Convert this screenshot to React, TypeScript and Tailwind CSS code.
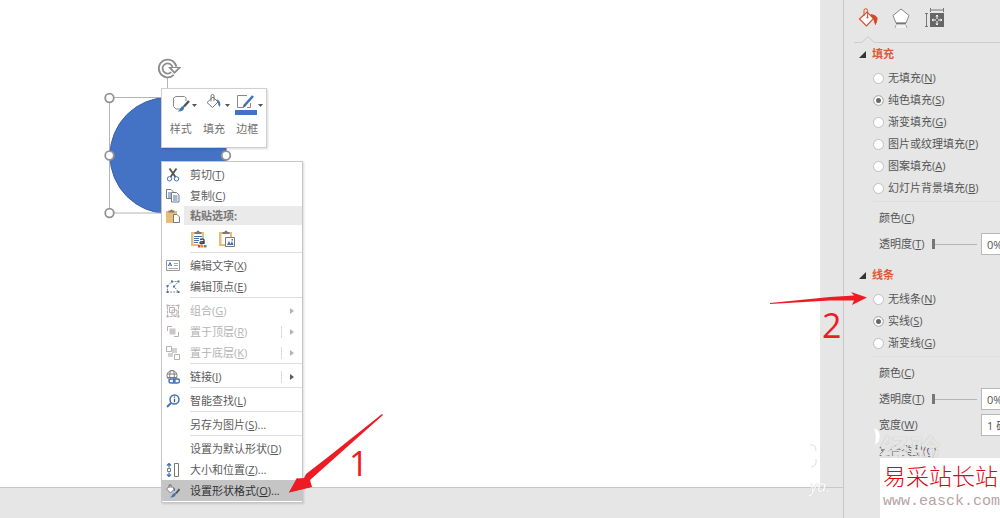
import React, { ReactNode } from "react";

type IconName =
  | "cut" | "copy" | "paste" | "text" | "points" | "group" | "front" | "back"
  | "link" | "search" | "size" | "format";

type Item = {
  label: string;
  accel: string;
  icon?: IconName;
  suffix?: string;
  disabled?: boolean;
  split?: boolean;
  arrow?: boolean;
  active?: boolean;
};

const groups: Item[][] = [
  [
    { label: "编辑文字", accel: "X", icon: "text" },
    { label: "编辑顶点", accel: "E", icon: "points" },
  ],
  [
    { label: "组合", accel: "G", icon: "group", disabled: true, arrow: true },
    { label: "置于顶层", accel: "R", icon: "front", disabled: true, arrow: true, split: true },
    { label: "置于底层", accel: "K", icon: "back", disabled: true, arrow: true, split: true },
  ],
  [{ label: "链接", accel: "I", icon: "link", arrow: true, split: true }],
  [{ label: "智能查找", accel: "L", icon: "search" }],
  [{ label: "另存为图片", accel: "S", suffix: "..." }],
  [
    { label: "设置为默认形状", accel: "D" },
    { label: "大小和位置", accel: "Z", icon: "size", suffix: "..." },
    { label: "设置形状格式", accel: "O", icon: "format", suffix: "...", active: true },
  ],
];

const blue = "#3f74b5";
const grey = "#7a7a7a";
const pale = "#b9b0b4";
const tan = "#e9bd78";

const drawings: Record<IconName, ReactNode> = {
  cut: (
    <>
      <path d="M3.500 0.500 L9.500 9 M10.500 0.500 L4.500 9" stroke="#555" strokeWidth="1.800" />
      <circle cx="3.500" cy="10.800" r="2.200" stroke={blue} />
      <circle cx="10.500" cy="10.800" r="2.200" stroke={blue} />
    </>
  ),
  copy: (
    <>
      <path d="M0.500 0.500h4.500l2 2v7h-6.500z" fill="#fff" stroke={grey} />
      <path d="M2 4h3M2 6h3M2 8h3" stroke={blue} />
      <path d="M5.500 3.500h5l2.500 2.500v7h-7.500z" fill="#fff" stroke={grey} />
      <path d="M7 7h4.500M7 9h4.500M7 11h4.500" stroke={blue} />
    </>
  ),
  paste: (
    <>
      <path d="M0 2h11v12H0z" fill={tan} />
      <path d="M2.500 3.500V1.500h1.800a1.300 1.300 0 0 1 2.500 0H8.500v2z" fill={grey} />
      <path d="M7.500 5.500h3.500l2.500 2.500v5.500h-6z" fill="#fff" stroke={grey} />
    </>
  ),
  text: (
    <>
      <path d="M0.500 1.500h13v10h-13z" fill="#fff" stroke="#999" />
      <path d="M2.300 7 L4 3.500 L5.700 7 M3 6h2" stroke={blue} />
      <path d="M8 4.500h4M8 6.500h4M2.500 9.500h9.500" stroke="#aaa" />
    </>
  ),
  points: (
    <>
      <path d="M1.500 6 L6 1.500 H12.500 L8 6.500 L12.500 12 H1.500 Z" stroke="#888" strokeDasharray="2 1" />
      <path d="M0.500 5h2v2h-2zM5 0.500h2v2H5zM11.500 0.500h2v2h-2zM7 5.500h2v2H7zM11.500 11h2v2h-2zM0.500 11h2v2h-2z" fill={blue} />
    </>
  ),
  group: (
    <>
      <path d="M1.500 1.500h11v11h-11z" stroke={pale} strokeDasharray="3 1" />
      <path d="M3.500 3.500h5v5h-5zM6 6h5v5H6z" stroke={pale} />
      <path d="M0.500 0.500h2v2h-2zM11.500 0.500h2v2h-2zM0.500 11.500h2v2h-2zM11.500 11.500h2v2h-2z" fill={pale} />
    </>
  ),
  front: (
    <>
      <path d="M6 1.500H1.500V6M12.500 7v4.500H8" stroke={pale} />
      <path d="M3.500 3.500h6v6h-6z" fill="#ccc6c9" />
    </>
  ),
  back: (
    <>
      <path d="M6 2h5v5H6zM2 7h5v4H2z" fill="#d6d0d3" />
      <path d="M0.500 0.500h5v5h-5zM8.500 8.500h5v5h-5z" fill="#fff" stroke={pale} />
    </>
  ),
  link: (
    <>
      <circle cx="6" cy="5.500" r="5" stroke={grey} />
      <ellipse cx="6" cy="5.500" rx="2.300" ry="5" stroke={grey} />
      <path d="M1 4h10M1 7.500h10" stroke={grey} />
      <rect x="3" y="9" width="6" height="4" rx="2" fill="#fff" stroke={blue} strokeWidth="1.400" />
      <rect x="7.500" y="9" width="6" height="4" rx="2" stroke={blue} strokeWidth="1.400" />
    </>
  ),
  search: (
    <>
      <circle cx="8.500" cy="5.500" r="4.500" fill="#fff" stroke={blue} strokeWidth="1.500" />
      <path d="M5 9 L1 13" stroke={blue} strokeWidth="2" />
      <path d="M8.500 2.500v1.200M8.500 4.700v3.500" stroke="#555" strokeWidth="1.300" />
    </>
  ),
  size: (
    <>
      <path d="M3 0.500v4M3 9.500v4M1 2.500l2-2 2 2M1 11.500l2 2 2-2" stroke={blue} strokeWidth="1.300" />
      <path d="M1.500 5.500h3v3h-3z" stroke={grey} />
      <path d="M8.500 0.500h4v13h-4z" fill="#fff" stroke={grey} />
    </>
  ),
  format: (
    <>
      <path d="M0.500 5 L4.500 1 L8.500 5 L4.500 9 Z" fill="#fff" stroke={grey} />
      <path d="M3 4V1.500a1 1 0 0 1 2 0V4" stroke={grey} />
      <path d="M13.500 5 L10 9.500" stroke="#555" strokeWidth="2" />
      <path d="M7 3Q9.500 4 9 7.500Q7.500 6 7 3" fill={blue} />
      <path d="M10 9 Q10 13.500 4 13.500 Q6 12 6.500 10.500 Q7.500 8.500 10 9" fill={blue} />
    </>
  ),
};

function Icon({ name }: { name: IconName }) {
  return (
    <svg viewBox="0 0 14 14" className="size-[14px]" fill="none" aria-hidden="true">
      {drawings[name]}
    </svg>
  );
}

function Row({ item }: { item: Item }) {
  const tone = item.disabled ? "text-[#b4b4b4]" : "text-[#5c5c5c]";
  return (
    <li>
      <button
        type="button"
        disabled={item.disabled}
        className={`flex h-[21px] w-full items-center text-left ${item.active ? "bg-[#c5c5c5] text-[#333]" : tone}`}
      >
        <span className="flex w-[22px] shrink-0 justify-center">{item.icon && <Icon name={item.icon} />}</span>
        <span className="flex-1 pl-[6px] whitespace-nowrap">
          {item.label}(<u className="underline-offset-1">{item.accel}</u>){item.suffix}
        </span>
        {item.arrow && (
          <span className={`flex h-3 w-[21px] items-center border-l pl-2 ${item.split ? "border-[#dcdcdc]" : "border-transparent"}`}>
            <svg viewBox="0 0 4 6" className="h-[6px] w-[4px]" aria-hidden="true">
              <path d="M0 0L4 3L0 6z" fill="currentColor" />
            </svg>
          </span>
        )}
      </button>
    </li>
  );
}

function ContextMenu() {
  return (
    <div className="absolute top-[161px] left-[161px] w-[142px] border border-[#c6c6c6] bg-white pt-[2px] pb-px shadow-[1px_1px_2px_rgba(0,0,0,0.15)]">
      <ul>
        <Row item={{ label: "剪切", accel: "T", icon: "cut" }} />
        <Row item={{ label: "复制", accel: "C", icon: "copy" }} />
      </ul>
      <div className="flex h-[19px] items-center font-bold text-[#777]">
        <span className="flex w-[22px] justify-center"><Icon name="paste" /></span>
        <span className="flex h-full flex-1 items-center bg-[#eaeaea] pl-[6px]">粘贴选项:</span>
      </div>
      <div className="flex h-[27px] items-center gap-3 pl-[29px]">
        <button type="button" aria-label="使用目标主题">
          <svg viewBox="0 0 16 18" className="h-[18px] w-[16px]" fill="none">
            <path d="M0 2h13v14H0z" fill={tan} />
            <path d="M2.500 4h8.500v10H2.500z" fill="#fff" />
            <path d="M3.500 4V2h2a1.500 1.500 0 0 1 3 0h2v2z" fill={grey} />
            <path d="M3 6.500h8M3 8.500h6M3 10.500h5M3 12.500h4" stroke={blue} />
            <path d="M8 8h7v8H8z" fill="#fff" />
            <path d="M9 9.500q4-1.500 4 1V14M13 11.500q-4 0-4 1.500t4 0" stroke="#444" strokeWidth="1.400" />
            <path d="M7 15h2.500v2.500H7z" fill="#d24726" />
            <path d="M10 15h2.500v2.500H10z" fill="#e08b3a" />
            <path d="M13 15h2.500v2.500H13z" fill="#58985f" />
          </svg>
        </button>
        <button type="button" aria-label="图片">
          <svg viewBox="0 0 16 18" className="h-[18px] w-[16px]" fill="none">
            <path d="M0 2h13v14H0z" fill={tan} />
            <path d="M2.500 4h8.500v10H2.500z" fill="#fff" />
            <path d="M3.500 4V2h2a1.500 1.500 0 0 1 3 0h2v2z" fill={grey} />
            <path d="M6.500 7.500h9v9h-9z" fill="#fff" stroke={grey} />
            <path d="M8 15l2-4 1.500 3 1.500-3 1.500 4z" fill={blue} />
            <path d="M12.500 9h1.500v1.500h-1.500z" fill={blue} />
          </svg>
        </button>
      </div>
      {groups.map((g, i) => (
        <ul key={i} className="relative pt-[3px] before:absolute before:top-0 before:right-0 before:left-[28px] before:h-px before:bg-[#dedede]">
          {g.map((it) => <Row key={it.accel} item={it} />)}
        </ul>
      ))}
    </div>
  );
}

function Caret() {
  return (
    <svg viewBox="0 0 5 3" className="h-[3px] w-[5px]" aria-hidden="true">
      <path d="M0 0h5L2.500 3z" fill="#555" />
    </svg>
  );
}

function MiniToolbar() {
  const cell = "flex flex-1 flex-col items-center gap-[5px] whitespace-nowrap";
  return (
    <div className="absolute top-[88px] left-[161px] flex h-[60px] w-[106px] border border-[#cfcfcf] bg-white px-[2px] pt-[5px] text-[#707070] shadow-[1px_1px_2px_rgba(0,0,0,0.15)]">
      <button type="button" className={cell}>
        <span className="flex items-center gap-[2px] pl-2">
          <svg viewBox="0 0 18 22" className="h-[22px] w-[18px]" fill="none">
            <path d="M8 15H4L1.500 12.500V4L4 2.500H12.500L14 4V7" stroke="#888" />
            <path d="M17 7L12 12.500" stroke="#555" strokeWidth="2.400" />
            <path d="M12 12q1.500 5.500-6.500 5.500q2.500-1.500 3-3.500q1-2 3.500-2" fill={blue} />
          </svg>
          <Caret />
        </span>
        <span>样式</span>
      </button>
      <button type="button" className={cell}>
        <span className="flex items-center gap-[3px] pl-2">
          <svg viewBox="0 0 16 22" className="h-[22px] w-[16px]" fill="none">
            <path d="M1 8.500L7 3L12 8L6.500 13.500Z" fill="#fff" stroke="#777" />
            <path d="M5 7.500V2a1.500 1.500 0 0 1 3 0V7" stroke="#777" />
            <path d="M10.500 5Q15.500 7 14 13Q11.500 11 12 8z" fill={blue} />
          </svg>
          <Caret />
        </span>
        <span>填充</span>
      </button>
      <button type="button" className={cell}>
        <span className="flex items-center gap-px pl-1">
          <svg viewBox="0 0 22 22" className="h-[22px] w-[22px]" fill="none">
            <path d="M12 1.500H2.500V13.500H9M15.500 9V13.500H12" stroke="#888" />
            <path d="M18 2L9 12" stroke={blue} strokeWidth="2.600" />
            <path d="M9.500 10.500L7.500 13.500L10.500 12.500z" fill="#555" />
            <path d="M0 16h22v5H0z" fill="#4472c4" />
          </svg>
          <Caret />
        </span>
        <span>边框</span>
      </button>
    </div>
  );
}

function Shape() {
  return (
    <svg viewBox="0 0 130 170" className="absolute top-[50px] left-[103px] h-[170px] w-[130px]" fill="none" aria-hidden="true">
      <circle cx="65" cy="105.500" r="58" fill="#4472c4" stroke="#3a62a8" />
      <path d="M6.500 47.500H123.500V163H6.500zM64.500 26V47" stroke="#b4b4b4" />
      <g fill="#fff" stroke="#939393" strokeWidth="1.800">
        <circle cx="6.500" cy="48" r="4.300" />
        <circle cx="6.500" cy="105.500" r="4.300" />
        <circle cx="6.500" cy="163" r="4.300" />
        <circle cx="123" cy="105.500" r="4.300" />
      </g>
      <path d="M69.500 23.500A7 7 0 1 1 71.500 17" stroke="#8c8c8c" strokeWidth="5.500" />
      <path d="M65 17H78.500L71.500 24z" fill="#8c8c8c" />
      <path d="M69.500 23.500A7 7 0 1 1 71.500 17" stroke="#fff" strokeWidth="2" />
      <path d="M68.500 18H75L71.500 21.500z" fill="#fff" />
    </svg>
  );
}

function Heading({ children }: { children: ReactNode }) {
  return (
    <button type="button" className="mb-[2px] flex h-[22px] items-center gap-[6px] pl-[15px] font-bold text-[#dc5a38]">
      <svg viewBox="0 0 7 7" className="size-[7px]" aria-hidden="true">
        <path d="M7 0V7H0z" fill="#333" />
      </svg>
      {children}
    </button>
  );
}

function Radios({ name, options, chosen }: { name: string; options: [string, string][]; chosen: string }) {
  return (
    <fieldset className="relative pb-[6px] pl-[29px] after:absolute after:right-0 after:bottom-[3px] after:left-[29px] after:h-px after:bg-[#dedede]">
      {options.map(([label, key]) => (
        <label key={key} className="flex h-[22px] items-center gap-1 whitespace-nowrap">
          <input
            type="radio"
            name={name}
            defaultChecked={key === chosen}
            className="size-[11px] shrink-0 appearance-none rounded-full border border-[#c0c0c0] bg-white checked:bg-[#666] checked:shadow-[inset_0_0_0_2px_white]"
          />
          <span>{label}(<u className="underline-offset-1">{key}</u>)</span>
        </label>
      ))}
    </fieldset>
  );
}

function Label({ text, k, id }: { text: string; k: string; id?: string }) {
  return (
    <label htmlFor={id} className="w-[53px] shrink-0 whitespace-nowrap">
      {text}(<u className="underline-offset-1">{k}</u>)
    </label>
  );
}

const fieldRow = "flex h-[26px] items-center pl-[35px]";
const box = "h-[22px] w-[60px] shrink-0 border border-[#b8b8b8] bg-white pl-[5px] text-[#555]";

function Transparency({ id }: { id: string }) {
  return (
    <div className={fieldRow}>
      <Label text="透明度" k="T" id={id} />
      <input
        id={id}
        type="range"
        defaultValue={0}
        className="h-[10px] w-[45px] shrink-0 appearance-none bg-transparent bg-[linear-gradient(#b5b5b5,#b5b5b5)] bg-[length:100%_1px] bg-center bg-no-repeat [&::-webkit-slider-thumb]:h-[10px] [&::-webkit-slider-thumb]:w-[3px] [&::-webkit-slider-thumb]:appearance-none [&::-webkit-slider-thumb]:bg-[#777]"
      />
      <input aria-label="透明度百分比" defaultValue="0%" className={`ml-1 ${box}`} />
    </div>
  );
}

function FormatPane() {
  return (
    <aside className="relative w-[157px] shrink-0 overflow-hidden border-l border-[#c8c8c8] text-[#555]">
      <div className="flex h-[36px] items-center gap-[14px] pl-[14px]">
        <button type="button" aria-label="填充与线条">
          <svg viewBox="0 0 20 20" className="size-[20px]" fill="none">
            <path d="M1.500 11L9 4L15.500 10.500L8.500 18Z" fill="#fff" stroke="#d8512f" strokeWidth="1.200" />
            <path d="M6 8V2.500a1.800 1.800 0 0 1 3.600 0V9" stroke="#d8512f" />
            <circle cx="9.500" cy="9.500" r="1" fill="#d8512f" />
            <path d="M13 6.500Q20 8 19 11.500L17.500 16.500Q16.500 11 13 6.500" fill="#d24726" stroke="#d24726" />
          </svg>
        </button>
        <button type="button" aria-label="效果">
          <svg viewBox="0 0 18 20" className="h-[20px] w-[18px]" fill="none">
            <path d="M9 1L17 7.500L14 15H4L1 7.500Z" fill="#fff" stroke="#888" />
            <path d="M4 15.500h10" stroke="#777" strokeWidth="1.600" />
            <path d="M4 17h10l1 3H3z" fill="#f2f2f2" />
            <path d="M4 17l-1 3M14 17l1 3" stroke="#aaa" />
          </svg>
        </button>
        <button type="button" aria-label="大小与属性">
          <svg viewBox="0 0 20 20" className="size-[20px]" fill="none">
            <path d="M6.500 2h13M6.500 0v4M19.500 0v4M2.500 5.500v13M1 5.500h3M1 18.500h3" stroke="#777" />
            <path d="M6 5h14v14H6z" fill="#666" />
            <path d="M13 7.500v9M8.500 12h9" stroke="#fff" strokeDasharray="3.500 2" />
            <path d="M12 8.500l1-1.500 1 1.500M12 15.500l1 1.500 1-1.500M9.500 11L8 12l1.500 1M16.500 11l1.500 1-1.500 1" stroke="#fff" />
          </svg>
        </button>
      </div>
      <div className="ml-[10px] flex h-[7px]">
        <span className="w-[8px] border-b border-[#cccccc]" />
        <svg viewBox="0 0 12 7" className="h-[7px] w-[12px]" fill="none" aria-hidden="true">
          <path d="M0 6.500L6 0.500L12 6.500" stroke="#c8c8c8" />
        </svg>
        <span className="flex-1 border-b border-[#cccccc]" />
      </div>
      <section>
        <Heading>填充</Heading>
        <Radios
          name="fill"
          chosen="S"
          options={[["无填充", "N"], ["纯色填充", "S"], ["渐变填充", "G"], ["图片或纹理填充", "P"], ["图案填充", "A"], ["幻灯片背景填充", "B"]]}
        />
        <div className={fieldRow}><Label text="颜色" k="C" /></div>
        <Transparency id="fill-alpha" />
      </section>
      <section className="mt-[7px]">
        <Heading>线条</Heading>
        <Radios name="line" chosen="S" options={[["无线条", "N"], ["实线", "S"], ["渐变线", "G"]]} />
        <div className={fieldRow}><Label text="颜色" k="C" /></div>
        <Transparency id="line-alpha" />
        <div className={fieldRow}>
          <Label text="宽度" k="W" id="width" />
          <input id="width" defaultValue="1 磅" className={`ml-[49px] ${box}`} />
        </div>
        <div className={fieldRow}><Label text="复合类型" k="C" /></div>
      </section>
    </aside>
  );
}

function Annotations() {
  return (
    <>
      <svg viewBox="0 0 96 80" className="absolute top-[413px] left-[288px] h-[80px] w-[96px]" aria-hidden="true">
        <path d="M94 1L95 2L22 67L24 74L1 79.500L9 65.500L16 65L18 61L40 44Z" fill="#ed1c24" />
        <path d="M1 79.500L9 65L17 70L24.500 73.500Z" fill="#ed1c24" />
      </svg>
      <svg viewBox="0 0 98 14" className="absolute top-[291px] left-[770px] h-[14px] w-[98px]" aria-hidden="true">
        <path d="M0 12L60 6L84 4.500L81 1L97 6.500L82 14L84 9.500L60 9.500L0 13Z" fill="#ed1c24" />
      </svg>
      <span className="absolute top-[446px] left-[349px] text-[34px] leading-[34px] text-[#ed1c24]">1</span>
      <span className="absolute top-[308px] left-[822px] text-[34px] leading-[34px] text-[#ed1c24]">2</span>
    </>
  );
}

export default function App() {
  return (
    <div className="relative flex h-screen overflow-hidden bg-[#e6e6e6] font-['Open_Sans','Noto_Sans_CJK_SC',sans-serif] text-[11px] leading-[16px]">
      <main className="relative flex flex-1 flex-col">
        <div className="mr-[23px] flex-1 bg-white" />
        <div className="h-[31px] border-t border-[#c8c8c8]" />
        <Shape />
        <MiniToolbar />
        <ContextMenu />
      </main>
      <FormatPane />
      <Annotations />
      <span className="absolute top-[435px] left-[880px] text-[30px] leading-[30px] font-bold text-white/70 [text-shadow:0_0_1px_#aaa]">经验</span>
      <span className="absolute top-[474px] left-[810px] text-[16px] leading-[24px] text-white italic [text-shadow:0_0_1px_#bbb]">ya.</span>
      <svg viewBox="0 0 12 28" className="absolute top-[443px] left-[808px] h-[28px] w-[12px]" fill="none" aria-hidden="true">
        <path d="M2 2Q8 1 8 8M8 16Q9 24 3 24" stroke="#ddd" />
      </svg>
      <svg viewBox="0 0 10 20" className="absolute top-[427px] left-[873px] h-[20px] w-[10px]" aria-hidden="true">
        <path d="M1 1Q9 4 6 14L2 18Q4 9 1 1" fill="#fff" />
      </svg>
      <div className="absolute right-0 bottom-0 h-[60px] w-[120px] bg-white pt-[4px] pl-[3px] whitespace-nowrap">
        <p className="text-[23px] leading-[28px] font-light text-[#e60012]">易采站长站</p>
        <p className="font-['Liberation_Mono',monospace] text-[15px] leading-[24px] text-[#b8a3a3]">www.easck.com</p>
      </div>
    </div>
  );
}
